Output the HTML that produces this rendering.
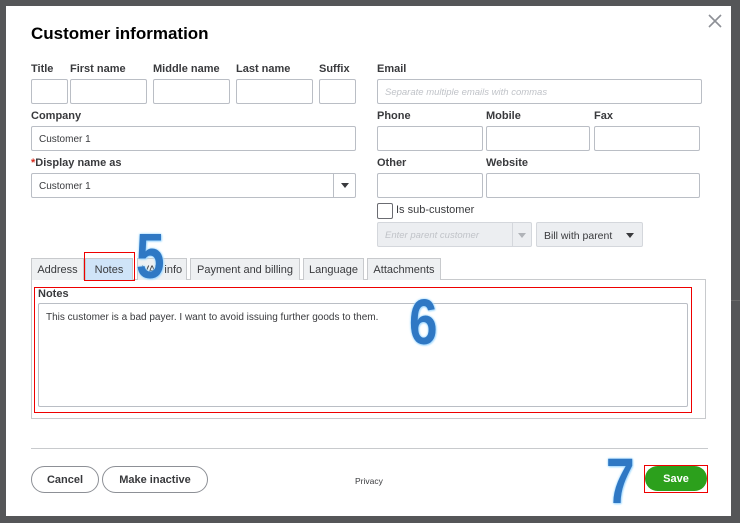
<!DOCTYPE html>
<html><head><meta charset="utf-8"><style>
*{margin:0;padding:0;box-sizing:border-box}
body{width:740px;height:523px;background:#555658;position:relative;overflow:hidden;font-family:"Liberation Sans",sans-serif;color:#393a3d}
.a{position:absolute}
.dlg{left:6px;top:6px;width:725px;height:510px;background:#fff}
.lbl{position:absolute;font-size:11px;font-weight:bold;color:#393a3d}
.in{position:absolute;border:1px solid #babec5;border-radius:2px;background:#fff;height:25px}
.tx{font-size:10px;padding:7px 0 0 7px;color:#393a3d}
.ph{font-size:9.5px;font-style:italic;color:#c0c3c8;padding:7px 0 0 7px}
.tab{position:absolute;top:258px;height:22px;border:1px solid #c8cacd;border-bottom:none;background:#eef0f2;font-size:11px;text-align:center;line-height:22px}
.big{position:absolute;font-family:"Liberation Sans",sans-serif;font-weight:bold;font-size:64px;color:#2f78c4;text-shadow:0 0 2px #a9dcff,0 0 3px #a9dcff,1px 1px 2px #9fd6ff;line-height:1;transform:scaleX(0.8);transform-origin:left top}
.btn{position:absolute;border:1px solid #8d9096;border-radius:14px;background:#fff;font-size:11px;font-weight:bold;text-align:center;line-height:26px;height:27px}
.arr{position:absolute;width:0;height:0;border-left:4px solid transparent;border-right:4px solid transparent;border-top:5px solid #393a3d}
</style></head><body>
<div class="a" style="left:731px;top:300px;width:9px;height:1px;background:#6a6a6a"></div>
<div class="a dlg"></div>
<div class="a" style="left:31px;top:24px;font-size:17px;font-weight:bold;color:#000">Customer information</div>
<svg class="a" style="left:708px;top:14px" width="14" height="14"><path d="M1 1L13 13M13 1L1 13" stroke="#8d9096" stroke-width="1.6"/></svg>

<div class="lbl" style="left:31px;top:63px">Title</div>
<div class="lbl" style="left:70px;top:63px">First name</div>
<div class="lbl" style="left:153px;top:63px">Middle name</div>
<div class="lbl" style="left:236px;top:63px">Last name</div>
<div class="lbl" style="left:319px;top:63px">Suffix</div>
<div class="in" style="left:31px;top:79px;width:37px"></div>
<div class="in" style="left:70px;top:79px;width:77px"></div>
<div class="in" style="left:153px;top:79px;width:77px"></div>
<div class="in" style="left:236px;top:79px;width:77px"></div>
<div class="in" style="left:319px;top:79px;width:37px"></div>
<div class="lbl" style="left:31px;top:110px">Company</div>
<div class="in tx" style="left:31px;top:126px;width:325px">Customer 1</div>
<div class="lbl" style="left:31px;top:157px"><span style="color:#d52b1e">*</span>Display name as</div>
<div class="in tx" style="left:31px;top:173px;width:325px">Customer 1</div>
<div class="a" style="left:333px;top:174px;width:1px;height:23px;background:#babec5"></div>
<div class="arr" style="left:341px;top:183px"></div>

<div class="lbl" style="left:377px;top:63px">Email</div>
<div class="in ph" style="left:377px;top:79px;width:325px">Separate multiple emails with commas</div>
<div class="lbl" style="left:377px;top:110px">Phone</div>
<div class="lbl" style="left:486px;top:110px">Mobile</div>
<div class="lbl" style="left:594px;top:110px">Fax</div>
<div class="in" style="left:377px;top:126px;width:106px"></div>
<div class="in" style="left:486px;top:126px;width:104px"></div>
<div class="in" style="left:594px;top:126px;width:106px"></div>
<div class="lbl" style="left:377px;top:157px">Other</div>
<div class="lbl" style="left:486px;top:157px">Website</div>
<div class="in" style="left:377px;top:173px;width:106px"></div>
<div class="in" style="left:486px;top:173px;width:214px"></div>
<div class="a" style="left:377px;top:203px;width:16px;height:16px;border:1px solid #6b6c72;border-radius:2px"></div>
<div class="a" style="left:396px;top:204px;font-size:11px">Is sub-customer</div>
<div class="in ph" style="left:377px;top:222px;width:155px;background:#eceef1;border-color:#d4d7dc">Enter parent customer</div>
<div class="a" style="left:512px;top:223px;width:1px;height:23px;background:#d4d7dc"></div>
<div class="arr" style="left:518px;top:233px;border-top-color:#b0b3b8"></div>
<div class="in" style="left:536px;top:222px;width:107px;background:#eceef1;border-color:#d4d7dc;font-size:10.5px;padding:7px 0 0 7px">Bill with parent</div>
<div class="arr" style="left:626px;top:233px"></div>

<div class="a" style="left:31px;top:279px;width:675px;height:140px;border:1px solid #c8cacd"></div>
<div class="tab" style="left:31px;width:53px">Address</div>
<div class="tab" style="left:85px;width:48px;background:#cfe4f8">Notes</div>
<div class="tab" style="left:137px;width:50px">VAT info</div>
<div class="tab" style="left:190px;width:110px">Payment and billing</div>
<div class="tab" style="left:303px;width:61px">Language</div>
<div class="tab" style="left:367px;width:74px">Attachments</div>
<div class="a" style="left:84px;top:252px;width:51px;height:29px;border:1px solid #e00"></div>
<div class="a" style="left:34px;top:287px;width:658px;height:126px;border:1px solid #e00"></div>
<div class="a" style="left:38px;top:288px;font-size:11px;font-weight:bold">Notes</div>
<div class="a" style="left:38px;top:303px;width:650px;height:104px;border:1px solid #babec5;border-radius:2px"></div>
<div class="a" style="left:46px;top:312px;font-size:10px">This customer is a bad payer. I want to avoid issuing further goods to them.</div>

<div class="a" style="left:31px;top:448px;width:677px;height:1px;background:#c8cacd"></div>
<div class="btn" style="left:31px;top:466px;width:68px">Cancel</div>
<div class="btn" style="left:102px;top:466px;width:106px">Make inactive</div>
<div class="a" style="left:355px;top:476px;font-size:8.5px">Privacy</div>
<div class="a" style="left:645px;top:466px;width:62px;height:25px;background:#2ca01c;border-radius:13px;color:#fff;font-size:11px;font-weight:bold;text-align:center;line-height:26px">Save</div>
<div class="a" style="left:644px;top:465px;width:64px;height:28px;border:1px solid #e00"></div>

<div class="big" style="left:136px;top:224px">5</div>
<div class="big" style="left:409px;top:290px">6</div>
<div class="big" style="left:606px;top:449px">7</div>
</body></html>
